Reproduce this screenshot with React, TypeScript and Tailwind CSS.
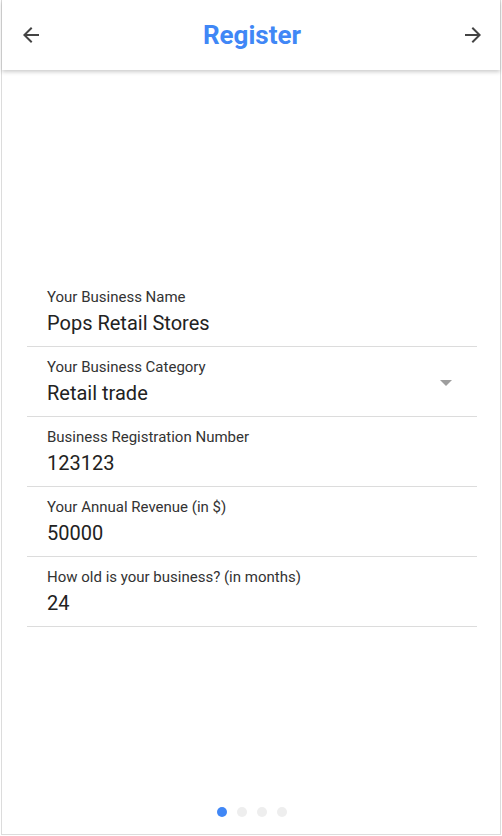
import React from "react";

const fields = [
  { label: "Your Business Name", value: "Pops Retail Stores" },
  { label: "Your Business Category", value: "Retail trade", select: true },
  { label: "Business Registration Number", value: "123123" },
  { label: "Your Annual Revenue (in $)", value: "50000" },
  { label: "How old is your business? (in months)", value: "24" },
];

const Arrow = ({ flip }: { flip?: boolean }) => (
  <svg
    width="24"
    height="24"
    viewBox="0 0 24 24"
    fill="#444"
    style={flip ? { transform: "scaleX(-1)" } : undefined}
  >
    <path d="M20 11H7.83l5.59-5.59L12 4l-8 8 8 8 1.41-1.41L7.83 13H20v-2z" />
  </svg>
);

const App = () => {
  return (
    <div
      className="w-[502px] h-[836px] px-px bg-white"
      style={{ fontFamily: "Roboto, 'Liberation Sans', sans-serif" }}
    >
      <div className="h-[835px] border border-t-0 border-[#dcdcdc] flex flex-col">
        <div className="h-[70px] flex items-center justify-between pl-[17px] pr-[15px] shadow-[0_2px_4px_rgba(0,0,0,0.2)] relative z-10">
          <Arrow />
          <div className="text-[26px] font-bold text-[#4087f6]">Register</div>
          <Arrow flip />
        </div>
        <div className="flex-1 flex flex-col">
          <div className="pt-[207px] ml-[25px] mr-[23px]">
            {fields.map((f) => (
              <div
                key={f.label}
                className="relative pt-[11px] pb-[10px] pl-[20px] border-b border-[#dcdcdc]"
              >
                <div className="text-[15px] leading-[18px] text-[#333]">{f.label}</div>
                <div className="mt-[4px] text-[20px] leading-[26px] text-[#222]">
                  {f.value}
                </div>
                {f.select && (
                  <div className="absolute right-[25px] top-[33px] w-0 h-0 border-l-[6px] border-r-[6px] border-t-[6px] border-l-transparent border-r-transparent border-t-[#9e9e9e]" />
                )}
              </div>
            ))}
          </div>
          <div className="mt-auto pb-[17px] flex justify-center gap-[10px] pl-[2px]">
            <span className="w-[10px] h-[10px] rounded-full bg-[#4087f6]" />
            <span className="w-[10px] h-[10px] rounded-full bg-[#eeeeee]" />
            <span className="w-[10px] h-[10px] rounded-full bg-[#eeeeee]" />
            <span className="w-[10px] h-[10px] rounded-full bg-[#eeeeee]" />
          </div>
        </div>
      </div>
    </div>
  );
};

export default App;
